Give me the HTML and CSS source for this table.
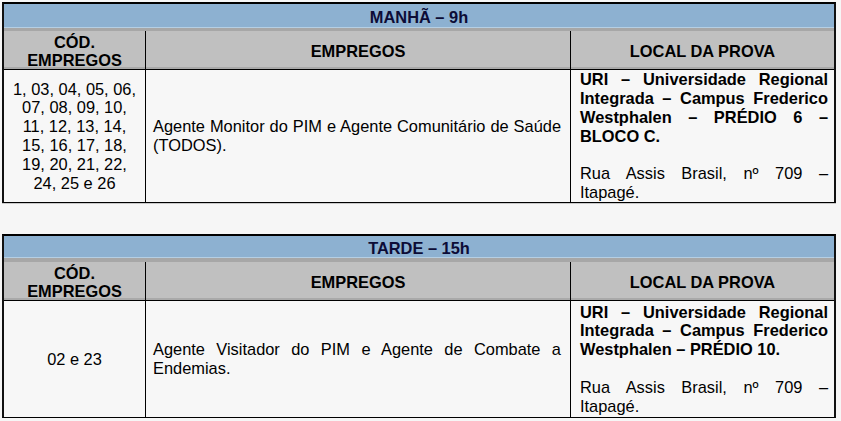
FILE: index.html
```html
<!DOCTYPE html>
<html lang="pt-BR">
<head>
<meta charset="utf-8">
<title>Locais de prova</title>
<link rel="stylesheet" href="styles.css">
</head>
<body>
<main class="page">
  <section class="sched">
    <div class="title">MANHÃ – 9h</div>
    <div class="row head">
      <div class="cell c1">CÓD.<br>EMPREGOS</div>
      <div class="cell c2">EMPREGOS</div>
      <div class="cell c3">LOCAL DA PROVA</div>
    </div>
    <div class="row data d1">
      <div class="cell c1">1, 03, 04, 05, 06,<br>07, 08, 09, 10,<br>11, 12, 13, 14,<br>15, 16, 17, 18,<br>19, 20, 21, 22,<br>24, 25 e 26</div>
      <div class="cell c2">
        <span class="jl">Agente Monitor do PIM e Agente Comunitário de Saúde</span>
        <span class="ll">(TODOS).</span>
      </div>
      <div class="cell c3">
        <span class="jl b">URI – Universidade Regional</span>
        <span class="jl b">Integrada – Campus Frederico</span>
        <span class="jl b">Westphalen – PRÉDIO 6 –</span>
        <span class="ll b">BLOCO C.</span>
        <span class="ll blank">&nbsp;</span>
        <span class="jl">Rua Assis Brasil, nº 709 –</span>
        <span class="ll">Itapagé.</span>
      </div>
    </div>
  </section>

  <section class="sched late">
    <div class="title">TARDE – 15h</div>
    <div class="row head">
      <div class="cell c1">CÓD.<br>EMPREGOS</div>
      <div class="cell c2">EMPREGOS</div>
      <div class="cell c3">LOCAL DA PROVA</div>
    </div>
    <div class="row data d2">
      <div class="cell c1">02 e 23</div>
      <div class="cell c2">
        <span class="jl">Agente Visitador do PIM e Agente de Combate a</span>
        <span class="ll">Endemias.</span>
      </div>
      <div class="cell c3">
        <span class="jl b">URI – Universidade Regional</span>
        <span class="jl b">Integrada – Campus Frederico</span>
        <span class="ll b">Westphalen – PRÉDIO 10.</span>
        <span class="ll blank">&nbsp;</span>
        <span class="jl">Rua Assis Brasil, nº 709 –</span>
        <span class="ll">Itapagé.</span>
      </div>
    </div>
  </section>
</main>
</body>
</html>
```

FILE: styles.css
```css
html, body {
  margin: 0;
  padding: 0;
  background: #f6f6f6;
}

body {
  font-family: "Liberation Sans", Arial, sans-serif;
  font-size: 16.4px;
  color: #000;
}

.page {
  display: flex;
  flex-direction: column;
  gap: 31px;
  padding: 2px 0 0 2px;
  width: 834px;
}

.sched {
  border-top: 2px solid #000;
  border-left: 2px solid #111;
  border-right: 2px solid #111;
  border-bottom: 1px solid #000;
  box-shadow: 0 1px 0 #c9c9c9;
  background: #f7f7f7;
}

.title {
  height: 24px;
  line-height: 26px;
  background: #8db1d1;
  border-bottom: 3px solid #a7a7a7;
  box-shadow: inset 0 -1px 0 #b5cfe4;
  text-align: center;
  font-weight: bold;
  color: #0c0c36;
}

.late .title {
  height: 22px;
  line-height: 25px;
  border-bottom-width: 4px;
}

.row {
  display: grid;
  grid-template-columns: 142px 425px 263px;
}

.cell {
  display: flex;
  flex-direction: column;
  justify-content: center;
}

.cell.c1,
.cell.c2 {
  border-right: 1px solid #000;
}

.head {
  height: 38px;
  background: #c0c0c0;
  border-bottom: 1px solid #000;
  box-shadow: inset 0 -2px 0 #a9a9a9;
  font-weight: bold;
  line-height: 18px;
  text-align: center;
}

.head .cell {
  padding-top: 2px;
}

.data {
  line-height: 18.8px;
}

.d1 { height: 132px; }
.d2 { height: 116px; }

.data .c1 {
  text-align: center;
}

.data .c2 {
  padding: 0 9px 0 7px;
}

.data .c3 {
  padding: 0 6px 0 9px;
}

.jl {
  display: block;
  text-align: justify;
  text-align-last: justify;
}

.ll {
  display: block;
  text-align: left;
}

.b {
  font-weight: bold;
}
```
